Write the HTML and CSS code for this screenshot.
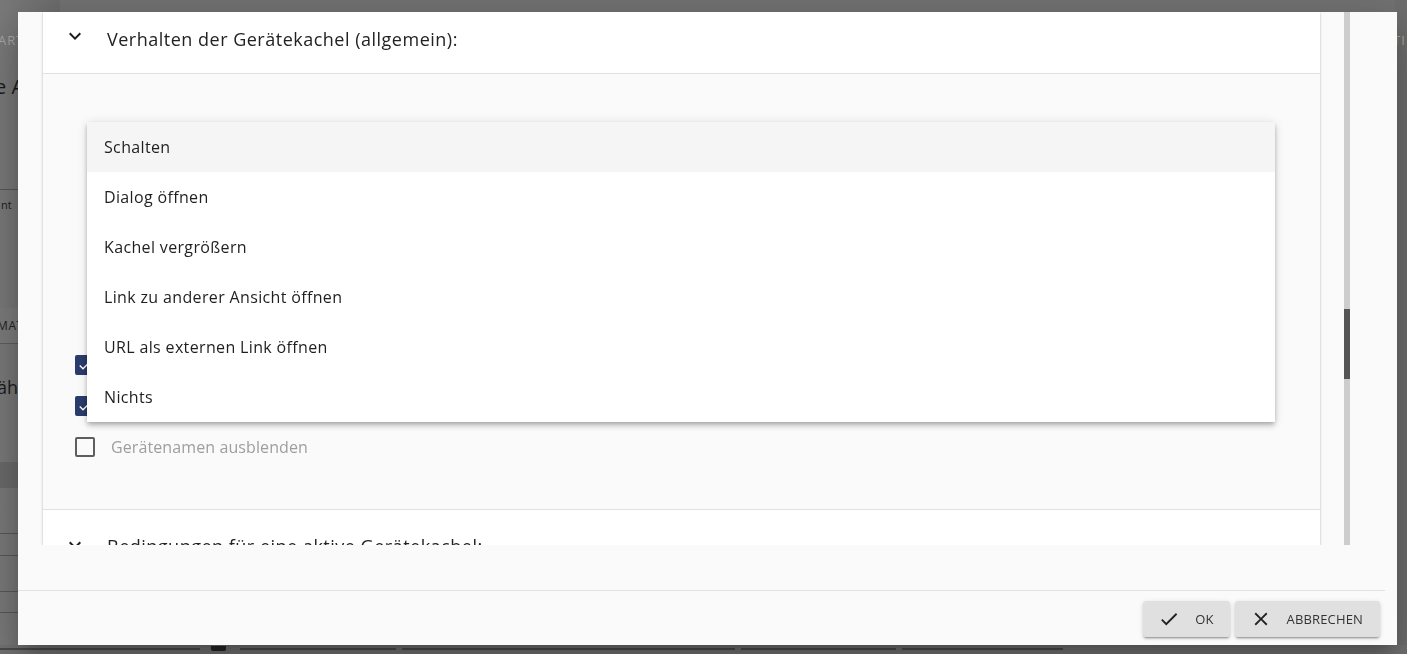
FILE: index.html
```html
<!DOCTYPE html>
<html lang="de">
<head>
<meta charset="utf-8">
<title>Gerätekachel</title>
<link rel="stylesheet" href="styles.css">
</head>
<body>
<div class="page">
  <div class="page-top">
    <div class="page-left">
      <div class="frag-tab">ART</div>
      <div class="frag-title">e A</div>
      <div class="frag-line frag-line-1"></div>
      <div class="frag-small">nt</div>
      <div class="frag-band">MAT</div>
      <div class="frag-title frag-title-2">ähl</div>
      <div class="frag-band2"></div>
      <div class="frag-line frag-line-a"></div>
      <div class="frag-line frag-line-b"></div>
      <div class="frag-line frag-line-c"></div>
      <div class="frag-line frag-line-d"></div>
    </div>
    <div class="page-right">
      <div class="frag-tab">TI</div>
    </div>
  </div>
  <div class="page-bottom">
    <span class="bl bl-1"></span>
    <span class="bbox"></span>
    <span class="bl bl-2"></span>
    <span class="bl bl-3"></span>
    <span class="bl bl-4"></span>
    <span class="bl bl-5"></span>
  </div>
</div>

<div class="dialog">
  <div class="dialog-content">
    <div class="panels">
      <div class="panel-header panel-header-1">
        <svg class="chev" viewBox="0 0 24 24"><path d="M16.59 8.59L12 13.17 7.41 8.59 6 10l6 6 6-6z"/></svg>
        <span class="panel-title">Verhalten der Gerätekachel (allgemein):</span>
      </div>
      <div class="panel-body">
        <div class="cb-row"><span class="cb cb-checked"><svg viewBox="0 0 24 24"><path d="M9 16.17L4.83 12l-1.42 1.41L9 19 21 7l-1.41-1.41z"/></svg></span></div>
        <div class="cb-row"><span class="cb cb-checked"><svg viewBox="0 0 24 24"><path d="M9 16.17L4.83 12l-1.42 1.41L9 19 21 7l-1.41-1.41z"/></svg></span></div>
        <div class="cb-row"><span class="cb"></span><span class="cb-label">Gerätenamen ausblenden</span></div>

        <ul class="menu">
          <li class="menu-item is-selected">Schalten</li>
          <li class="menu-item">Dialog öffnen</li>
          <li class="menu-item">Kachel vergrößern</li>
          <li class="menu-item">Link zu anderer Ansicht öffnen</li>
          <li class="menu-item">URL als externen Link öffnen</li>
          <li class="menu-item">Nichts</li>
        </ul>
      </div>
      <div class="panel-header panel-header-2">
        <svg class="chev" viewBox="0 0 24 24"><path d="M16.59 8.59L12 13.17 7.41 8.59 6 10l6 6 6-6z"/></svg>
        <span class="panel-title">Bedingungen für eine aktive Gerätekachel:</span>
      </div>
    </div>
    <div class="scrollbar"><div class="thumb"></div></div>
  </div>
  <div class="dialog-divider"></div>
  <div class="dialog-actions">
    <button class="btn">
      <svg viewBox="0 0 24 24"><path d="M9 16.17L4.83 12l-1.42 1.41L9 19 21 7l-1.41-1.41z"/></svg>
      <span>OK</span>
    </button>
    <button class="btn">
      <svg viewBox="0 0 24 24"><path d="M19 6.41L17.59 5 12 10.59 6.41 5 5 6.41 10.59 12 5 17.59 6.41 19 12 13.41 17.59 19 19 17.59 13.41 12z"/></svg>
      <span>Abbrechen</span>
    </button>
  </div>
</div>
</body>
</html>
```

FILE: styles.css
```css
* { box-sizing: border-box; }
html, body { margin: 0; height: 100%; }
body {
  background: #727272;
  font-family: "Open Sans", "Noto Sans", sans-serif;
  overflow: hidden;
}

/* dimmed page behind the modal */
.page { display: grid; grid-template-rows: 645px 9px; height: 654px; }
.page-top { display: flex; justify-content: space-between; }
.page-left { width: 60px; padding-top: 31px; display: flex; flex-direction: column; overflow: hidden;
  background: linear-gradient(to right, #7a7a7a, #6c6c6c); }
.page-right { width: 12px; padding-top: 31px; overflow: hidden; background: #6e6e6e; }
.frag-tab { color: #a6a6a6; font-size: 13px; line-height: 18px; letter-spacing: 1px; margin-left: -2px; white-space: nowrap; }
.frag-title { margin-top: 26px; color: #1b1b1b; font-size: 20px; line-height: 24px; margin-left: -5px; white-space: nowrap; }
.frag-title-2 { margin-top: 31px; margin-left: -3px; font-size: 18px; }
.frag-line { height: 1px; background: #575757; flex: none; }
.frag-line-1 { margin-top: 90px; }
.frag-small { margin-top: 8px; font-size: 11px; line-height: 14px; color: #1b1b1b; margin-left: 1px; }
.frag-band { margin-top: 96px; height: 36px; line-height: 36px; font-size: 12px; color: #222;
  background: #7c7c7c; border-bottom: 1px solid #5e5e5e; margin-left: -3px; letter-spacing: 0.6px; flex: none; white-space: nowrap; }
.frag-band2 { margin-top: 63px; height: 26px; background: #6a6a6a; flex: none; }
.frag-line-a { margin-top: 45px; }
.frag-line-b { margin-top: 21px; }
.frag-line-c { margin-top: 35px; }
.frag-line-d { margin-top: 20px; }

.page-bottom { display: flex; align-items: flex-start; padding-top: 2px; }
.bl { height: 2px; background: #4b4b4b; margin-top: 1px; }
.bl-1 { width: 200px; }
.bbox { width: 15px; height: 5px; margin-left: 11px; margin-top: -1px; background: #262626; border-radius: 0 0 2px 2px; }
.bl-2 { width: 156px; margin-left: 14px; }
.bl-3 { width: 333px; margin-left: 6px; }
.bl-4 { width: 155px; margin-left: 6px; }
.bl-5 { width: 161px; margin-left: 6px; }

/* modal */
.dialog {
  position: fixed;
  left: 18px; top: 12px;
  width: 1379px; height: 633px;
  background: #fafafa;
  box-shadow: 0 11px 15px -7px rgba(0,0,0,.2), 0 24px 38px 3px rgba(0,0,0,.14), 0 9px 46px 8px rgba(0,0,0,.12);
  display: flex; flex-direction: column;
}
.dialog-content { height: 533px; display: flex; padding-left: 25px; overflow: hidden; flex: none; }
.panels {
  width: 1277px; flex: none; display: flex; flex-direction: column;
  box-shadow: 0 1px 3px 0 rgba(0,0,0,.2), 0 1px 1px 0 rgba(0,0,0,.14), 0 2px 1px -1px rgba(0,0,0,.12);
}
.panel-header { background: #fff; display: flex; align-items: flex-start; padding-left: 20px; flex: none; }
.panel-header-1 { height: 62px; padding-top: 12px; border-bottom: 1px solid #e0e0e0; }
.panel-header-2 { height: 74px; padding-top: 23px; }
.chev { width: 24px; height: 24px; fill: #1e1e1e; flex: none; }
.panel-title { margin-left: 20px; font-size: 18px; line-height: 24px; color: #222; letter-spacing: 0.5px; }
.panel-header-1 .panel-title { margin-top: 3px; }
.panel-header-2 .panel-title { margin-top: 1px; }

.panel-body {
  position: relative;
  height: 436px; flex: none;
  background: #fafafa;
  border-bottom: 1px solid #e0e0e0;
  padding: 270px 0 0 32px;
}
.cb-row { height: 41px; display: flex; align-items: center; }
.cb { width: 20px; height: 20px; border: 2px solid #5e5e5e; border-radius: 2px; flex: none; display: flex; align-items: center; justify-content: center; }
.cb-checked { background: #2a3c6b; border-color: #2a3c6b; }
.cb-checked svg { width: 16px; height: 16px; fill: #fff; }
.cb-label { margin-left: 16px; font-size: 16px; letter-spacing: 0.1px; color: #9e9e9e; }

.menu {
  position: absolute; left: 44px; top: 48px;
  width: 1188px; margin: 0; padding: 0; list-style: none;
  background: #fff;
  box-shadow: 0 2px 4px -1px rgba(0,0,0,.2), 0 4px 5px 0 rgba(0,0,0,.14), 0 1px 10px 0 rgba(0,0,0,.12);
}
.menu-item { height: 50px; display: flex; align-items: center; padding-left: 17px; font-size: 16px; letter-spacing: 0.35px; color: #1f1f1f; }
.menu-item.is-selected { background: #f5f5f5; }

.scrollbar { width: 6px; margin-left: 24px; background: #cdcdcd; flex: none; padding-top: 297px; }
.thumb { height: 70px; background: #555; }

.dialog-divider { height: 1px; background: #e2e2e2; margin: 45px 12px 0 0; flex: none; }
.dialog-actions { display: flex; justify-content: flex-end; gap: 5px; padding: 10px 17px 0 0; }
.btn {
  height: 36px; display: flex; align-items: center;
  padding: 0 17px 0 15px;
  border: none; border-radius: 3px;
  background: #e0e0e0; color: #333;
  font-family: "Open Sans", "Noto Sans", sans-serif;
  font-size: 13px; letter-spacing: 0.15px; text-transform: uppercase;
  box-shadow: 0 3px 1px -2px rgba(0,0,0,.2), 0 2px 2px 0 rgba(0,0,0,.14), 0 1px 5px 0 rgba(0,0,0,.12);
}
.btn:first-child { padding-right: 16px; }
.btn svg { width: 22px; height: 22px; fill: #222; margin-right: 15px; }
```
